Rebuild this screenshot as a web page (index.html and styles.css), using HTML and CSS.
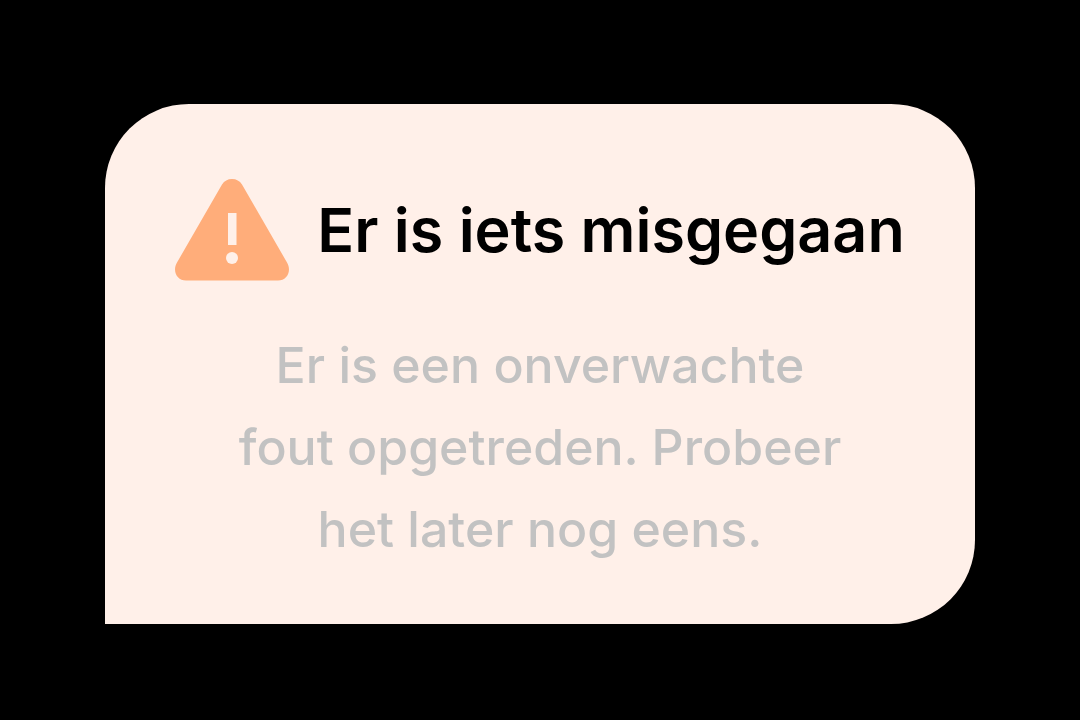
FILE: index.html
```html
<!DOCTYPE html>
<html lang="nl">
  <head>
    <meta charset="UTF-8" />
    <meta name="viewport" content="width=device-width, initial-scale=1.0" />
    <title>Er is iets misgegaan</title>
    <link rel="stylesheet" href="styles.css">
  </head>
  <body>
    <main class="message" role="alert">
      <div class="message-header">
        <svg class="icon" viewBox="0 0 114 102" aria-hidden="true">
          <path fill="#ffad7a" d="M47 5.500Q50.500 0 57 0Q63.500 0 67 5.500L112 83.500C117 92 112 101.500 103 101.500H11C2 101.500 -3 92 2 83.500Z" />
          <path fill="#fff0e9" d="M53 34H61.500V66H53Z" />
          <circle fill="#fff0e9" cx="57" cy="79" r="6" />
        </svg>
        <h1>Er is iets misgegaan</h1>
      </div>
      <p>Er is een onverwachte<br>fout opgetreden. Probeer<br>het later nog eens.</p>
    </main>
  </body>
</html>
```

FILE: styles.css
```css
* {
  box-sizing: border-box;
}
body {
  margin: 0;
  min-height: 100vh;
  padding: 8px 105px 0;
  font-family: Inter, "Liberation Sans", sans-serif;
  background-color: #000;
  color: #000;
  display: flex;
  justify-content: center;
  align-items: center;
}
.message {
  flex: 1;
  padding: 75px 40px 54px;
  background-color: #fff0e9;
  border-radius: 84px 84px 84px 0;
  text-align: center;
}
.message-header {
  display: flex;
  align-items: center;
  justify-content: center;
  gap: 28px;
}
.icon {
  width: 114px;
  height: 102px;
  flex: none;
}
h1 {
  margin: 0;
  font-size: 61px;
  line-height: 80px;
  font-weight: 600;
  white-space: nowrap;
}
p {
  margin: 43px 0 0;
  font-size: 50px;
  line-height: 82px;
  font-weight: 500;
  color: #c2c2c2;
}
```
